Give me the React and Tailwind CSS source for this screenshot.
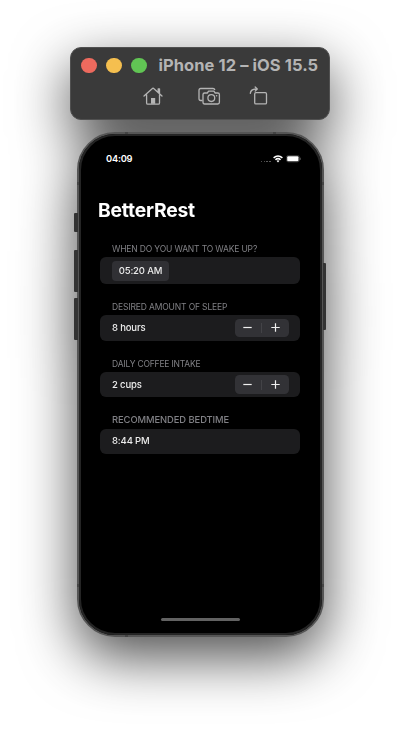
import React from "react";

function Toolbar() {
  return (
    <header className="h-[73px] w-[260px] rounded-[11px] border border-[#505050] bg-[#3a3a3a] text-[#b4b4b4]">
      <div className="flex h-[35px] items-center pl-[10px]">
        <div className="flex gap-[9.7px]">
          <span className="size-[15.5px] rounded-full bg-[#ed6a5e]" />
          <span className="size-[15.5px] rounded-full bg-[#f5bf4f]" />
          <span className="size-[15.5px] rounded-full bg-[#61c554]" />
        </div>
        <h1 className="ml-[11.5px] text-[16.5px] font-bold tracking-[0.08px] whitespace-nowrap">iPhone 12 – iOS 15.5</h1>
      </div>
      <div className="flex pt-[2px] pl-[72px]">
        <svg className="h-[22px] w-[20px]" viewBox="0 0 20 22" fill="none" stroke="currentColor" strokeWidth="1.3" strokeLinecap="round" strokeLinejoin="round">
          <path d="M1 11 9.7 3.2a.6.6 0 0 1 .7 0L19 11M3.6 9.4v8.5q0 1.2 1.2 1.2h10.5q1.2 0 1.2-1.2V9.4M15.2 7V3.8h1.3V8.2" />
          <path d="M8 13h4.2v5.8H8z" fill="currentColor" stroke="none" />
        </svg>
        <svg className="ml-[34px] h-[22px] w-[24px]" viewBox="0 0 24 22" fill="none" stroke="currentColor" strokeWidth="1.3" strokeLinejoin="round">
          <path d="M5.5 15.5H3.7q-1.7 0-1.7-1.7V5.2Q2 3.5 3.7 3.5H16q1.4 0 1.9 1.5" />
          <path d="M7.6 8h2.7l1.3-1.8h5.3L18.2 8h2.6q1.6 0 1.6 1.6v7.7q0 1.7-1.6 1.7H7.6Q6 19 6 17.3V9.6Q6 8 7.6 8Z" />
          <circle cx="14.3" cy="13.1" r="3.4" />
          <circle cx="19.6" cy="10.8" r=".8" fill="currentColor" stroke="none" />
        </svg>
        <svg className="ml-[28px] h-[22px] w-[20px]" viewBox="0 0 20 22" fill="none" stroke="currentColor" strokeWidth="1.3" strokeLinecap="round" strokeLinejoin="round">
          <rect x="5.7" y="7.7" width="11.8" height="11.2" rx="1.2" />
          <path d="M1.3 8.3q.5-4.3 6.6-4.3M6.2 2 8.3 4 6.2 6.1" />
        </svg>
      </div>
    </header>
  );
}

function StatusBar() {
  return (
    <div className="flex h-[14px] items-center justify-between pr-[19px] pl-[25.5px]">
      <span className="text-[9.3px] font-semibold tracking-[-0.2px]">04:09</span>
      <div className="flex items-center">
        <div className="mt-[5px] mr-[2.5px] flex gap-[1.5px]">
          <i className="size-[1.3px] rounded-full bg-[#666]" />
          <i className="size-[1.3px] rounded-full bg-[#666]" />
          <i className="size-[1.3px] rounded-full bg-[#666]" />
          <i className="size-[1.3px] rounded-full bg-[#666]" />
        </div>
        <svg className="h-[8px] w-[10px]" viewBox="0 0 10 8" fill="none" stroke="white" strokeWidth="1.5">
          <path d="M.6 2.9Q5-1 9.4 2.9M2.4 4.8Q5 2.5 7.6 4.8" />
          <path d="M3.5 5.8Q5 4.7 6.5 5.8L5 7.4Z" fill="white" stroke="none" />
        </svg>
        <svg className="ml-[2.5px] h-[8px] w-[15px]" viewBox="0 0 15 8">
          <rect x=".4" y=".5" width="13" height="6.4" rx="1.9" fill="none" stroke="#555" strokeWidth=".6" />
          <rect x="1.2" y="1.2" width="11.3" height="5" rx="1" fill="white" />
          <path d="M14.2 2.7v2.2" stroke="#777" strokeWidth=".8" />
        </svg>
      </div>
    </div>
  );
}

function Stepper() {
  return (
    <div className="flex h-[18.5px] w-[54px] items-center rounded-[4.5px] bg-[#323236]">
      <button className="flex flex-1 justify-center" aria-label="Decrease">
        <svg className="size-[9px]" viewBox="0 0 9 9" stroke="#f0f0f0" strokeWidth="1.2"><path d="M.3 4.5h8.4" /></svg>
      </button>
      <span className="h-[10px] w-px bg-[#434347]" />
      <button className="flex flex-1 justify-center" aria-label="Increase">
        <svg className="size-[9px]" viewBox="0 0 9 9" stroke="#f0f0f0" strokeWidth="1.2"><path d="M.3 4.5h8.4M4.5.3v8.4" /></svg>
      </button>
    </div>
  );
}

function Section({ title, titleClass, cardClass, children }) {
  return (
    <section>
      <h3 className={"pl-[12px] leading-[12px] whitespace-nowrap text-[#808085] " + titleClass}>{title}</h3>
      <div className={"flex items-center justify-between rounded-[6px] bg-[#1c1c1e] pr-[11px] pl-[12px] text-[9.5px] font-medium tracking-[-0.15px] text-[#ececec] " + cardClass}>
        {children}
      </div>
    </section>
  );
}

function Phone() {
  return (
    <div className="relative mt-[12px] h-[505px] w-[247px]">
      <i className="absolute top-[81px] -left-[3px] h-[19px] w-[4px] rounded-l-[1px] bg-[#333]" />
      <i className="absolute top-[118px] -left-[3px] h-[42px] w-[4px] rounded-l-[1px] bg-[#333]" />
      <i className="absolute top-[166px] -left-[3px] h-[42px] w-[4px] rounded-l-[1px] bg-[#333]" />
      <i className="absolute top-[131px] -right-[2px] h-[67px] w-[3px] rounded-r-[1px] bg-[#333]" />
      <div className="h-full rounded-[38px] border-2 border-[#555] bg-black">
        <main className="flex h-full flex-col rounded-[36px] border-2 border-[#252525] pt-[16px] text-white">
          <StatusBar />
          <h2 className="mt-[30px] pl-[17.5px] text-[19.3px] leading-[29px] font-bold tracking-[-0.2px]">BetterRest</h2>
          <div className="mt-[18px] flex flex-col pr-[20px] pl-[19.5px]">
            <Section title="WHEN DO YOU WANT TO WAKE UP?" titleClass="text-[8.5px] tracking-[-0.16px]" cardClass="mt-[2px] h-[27px]">
              <span className="flex h-[20px] w-[57px] items-center justify-center rounded-[4px] bg-[#303034] pt-px">05:20 AM</span>
            </Section>
            <Section title="DESIRED AMOUNT OF SLEEP" titleClass="mt-[17px] text-[8.5px] tracking-[-0.14px]" cardClass="mt-[2px] h-[25.5px]">
              <span className="pt-px">8 hours</span><Stepper />
            </Section>
            <Section title="DAILY COFFEE INTAKE" titleClass="mt-[17px] text-[8.5px] tracking-[-0.2px]" cardClass="mt-[2.5px] h-[25px]">
              <span className="pt-px">2 cups</span><Stepper />
            </Section>
            <Section title="RECOMMENDED BEDTIME" titleClass="mt-[16.5px] text-[9.4px] font-medium tracking-[-0.07px]" cardClass="mt-[3px] h-[25px]">
              <span className="pt-px">8:44 PM</span>
            </Section>
          </div>
          <span className="mt-auto mb-[12px] h-[3px] w-[79px] self-center rounded-full bg-[#626262]" />
        </main>
      </div>
      <i className="absolute top-0 left-[48px] h-[2px] w-[3px] bg-[#444]" />
      <i className="absolute top-0 right-[48px] h-[2px] w-[3px] bg-[#444]" />
      <i className="absolute bottom-0 left-[48px] h-[2px] w-[3px] bg-[#444]" />
      <i className="absolute top-[50px] left-0 h-[3px] w-[2px] bg-[#444]" />
      <i className="absolute top-[50px] right-0 h-[3px] w-[2px] bg-[#444]" />
      <i className="absolute bottom-[50px] left-0 h-[3px] w-[2px] bg-[#444]" />
      <i className="absolute right-0 bottom-[50px] h-[3px] w-[2px] bg-[#444]" />
    </div>
  );
}

export default function App() {
  return (
    <div className="h-[732px] w-[400px] overflow-hidden bg-white font-['Inter','Liberation_Sans',sans-serif]">
      <div className="flex flex-col items-center pt-[47px] drop-shadow-[0_20px_28px_rgba(0,0,0,0.7)]">
        <Toolbar />
        <Phone />
      </div>
    </div>
  );
}
